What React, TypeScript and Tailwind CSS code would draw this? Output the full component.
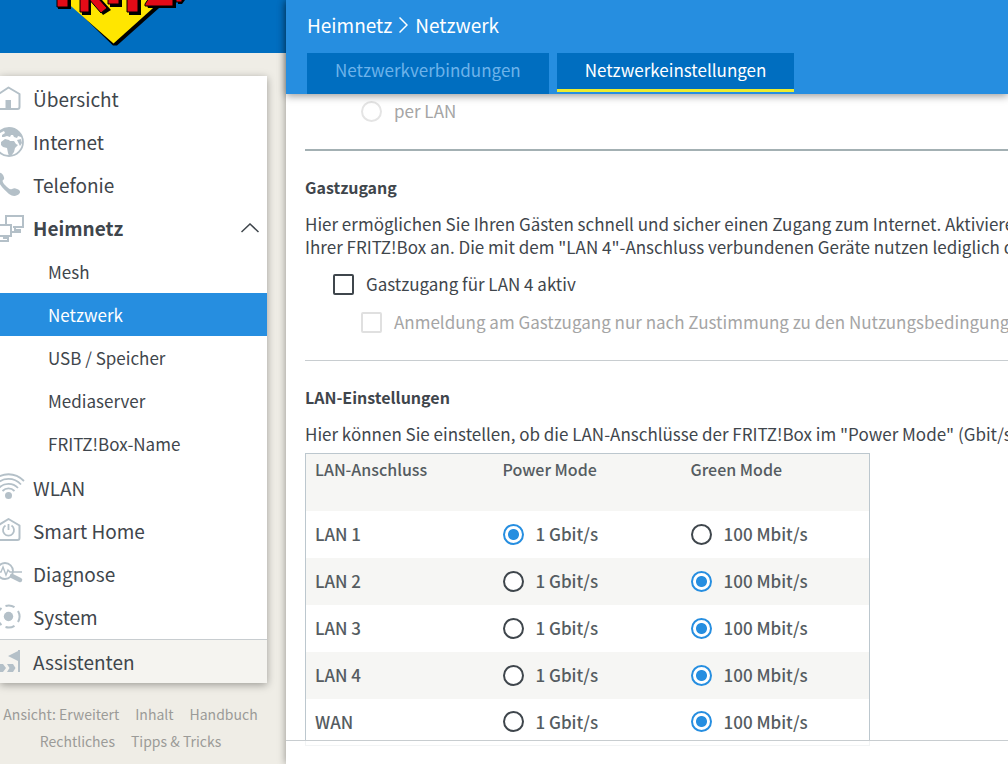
import type { ReactNode } from "react"

type NavItem = {
  label: string
  icon: ReactNode
}

const topItems: NavItem[] = [
  {
    label: "Übersicht",
    icon: (
      <>
        <path d="M-2 11.500 8.500 4.500 19.500 11V24a2 2 0 0 1-2 2H-2" fill="none" stroke="currentColor" strokeWidth="2" strokeLinejoin="round" />
        <path d="M5.500 17h5.500v9H5.500z" />
      </>
    ),
  },
  {
    label: "Internet",
    icon: (
      <>
        <circle cx="9" cy="16" r="14" fill="none" stroke="currentColor" strokeWidth="1.800" />
        <path d="M-4 10C0 4 4 2 9 2c5 0 10 3 13 8l-1 1-3-1-1 2-3-1-1-2-2 0-1 2-3-1-3 1-2 0 0-2 3-2-1-2-4 2-2 3z" />
        <path d="M1 16l4-3 4 1 1 1 4 0 2 3 2 1-3 3-1 4-3 4-2 0-1-3-1-5-4-1-2-2zM17 14l4-1 1 4-2 3z" />
      </>
    ),
  },
  {
    label: "Telefonie",
    icon: (
      <path d="M-2 4c2-1 4 0 5 2 1 2 2 4 0 5-1 1 0 3 2 5 3 3 5 5 7 4 2-1 3-1 5 0 3 1 4 3 2 5-2 2-6 3-10 0C4 21-2 14-3 9z" />
    ),
  },
]

const subItems = ["Mesh", "Netzwerk", "USB / Speicher", "Mediaserver", "FRITZ!Box-Name"]

const bottomItems: NavItem[] = [
  {
    label: "WLAN",
    icon: (
      <>
        <circle cx="8.500" cy="23.500" r="3.500" />
        <path d="M-7 9C2 0 15 0 24 9M-4 12.500C3 5 14 5 21 12.500M-1 16C4 10.500 13 10.500 18 16M2.500 19C6 15.500 11 15.500 14.500 19" fill="none" stroke="currentColor" strokeWidth="1.800" />
      </>
    ),
  },
  {
    label: "Smart Home",
    icon: (
      <>
        <path d="M-2 10.500 8.500 4 19.500 10.500V23a2 2 0 0 1-2 2H-2" fill="none" stroke="currentColor" strokeWidth="2" strokeLinejoin="round" />
        <path d="M5.500 10.500a5.500 5.500 0 1 0 6 0M8.500 9v6" fill="none" stroke="currentColor" strokeWidth="1.800" />
      </>
    ),
  },
  {
    label: "Diagnose",
    icon: (
      <>
        <circle cx="5" cy="13" r="8" fill="none" stroke="currentColor" strokeWidth="1.800" />
        <path d="M-1 14h2l2-5 3 8 2-5 2 2h12" fill="none" stroke="currentColor" strokeWidth="1.400" />
        <path d="M12 18l8 4" stroke="currentColor" strokeWidth="4.500" strokeLinecap="round" />
      </>
    ),
  },
  {
    label: "System",
    icon: (
      <>
        <circle cx="8.500" cy="15.500" r="4.700" />
        <path d="M5.500 5a11 11 0 0 1 9 1.200M18 10a11 11 0 0 1 0 11M14.500 24.800a11 11 0 0 1-9 1.200M1.500 24a11 11 0 0 1-3-4M-1.500 11a11 11 0 0 1 3-4" fill="none" stroke="currentColor" strokeWidth="2" />
      </>
    ),
  },
]

const footerLinks = ["Ansicht: Erweitert", "Inhalt", "Handbuch", "Rechtliches", "Tipps & Tricks"]

const ports = [
  { name: "LAN 1", mode: "power" },
  { name: "LAN 2", mode: "green" },
  { name: "LAN 3", mode: "green" },
  { name: "LAN 4", mode: "green" },
  { name: "WAN", mode: "green" },
]

const MenuIcon = ({ children }: { children: ReactNode }) => (
  <svg viewBox="0 0 25 32" className="h-8 w-[25px] shrink-0 text-[#b4c0c8]" fill="currentColor" aria-hidden="true">
    {children}
  </svg>
)

const MenuLink = ({ label, icon }: NavItem) => (
  <a href="#" className="flex h-[43px] items-center gap-2 text-[19px] leading-6">
    <MenuIcon>{icon}</MenuIcon>
    {label}
  </a>
)

const radioClass =
  "size-[21px] shrink-0 appearance-none rounded-full border-2 border-[#3f464c] bg-white checked:border-[#268ee0] checked:bg-[radial-gradient(circle,#268ee0_5px,#fff_6px)] disabled:border-[#e4e4e4]"

const checkboxClass =
  "size-[21px] shrink-0 appearance-none rounded-xs border-2 border-[#3f464c] bg-white disabled:border-[#e0e0e0]"

const Logo = () => (
  <svg viewBox="50 0 150 50" className="ml-[50px] h-[50px] w-[150px]" role="img" aria-label="FRITZ!">
    <path d="M66 0 113 45.500h4L168 0z" fill="#000" />
    <path d="M64 0 113.500 43.500 162 0z" fill="#ffe600" />
    {/* lower ends of the lettering, shadow first */}
    <path d="M58 0h13v9H58zM81 0h10v15H82zM92 0h10l9 10-8 5zM110 0h12v7h-12zM129 0h12v15h-12zM147 5l4-5h25v8h-28zM178 0h7l-3 4h-4z" fill="#000" />
    <g fill="#e30b17" stroke="#000" strokeWidth="1">
      <path d="M57-2h11v9H57z" />
      <path d="M80-2h9v14h-9z" />
      <path d="M88-2h10l9 10-6 5z" />
      <path d="M108-2h11v6h-11z" />
      <path d="M127-2h11v14h-11z" />
      <path d="M145 4l4-6h24v8h-28z" />
      <path d="M176-2h6v4h-6z" />
    </g>
  </svg>
)

const Sidebar = () => (
  <aside className="flex w-[286px] shrink-0 flex-col bg-[#efede6]">
    <div className="h-[53px] bg-[#006ec0]">
      <Logo />
    </div>

    {/* Menu */}
    <nav className="mt-[23px] mr-[19px] bg-white pt-px shadow-[0_2px_8px_rgba(0,0,0,0.35)]">
      {topItems.map((item) => (
        <MenuLink key={item.label} {...item} />
      ))}

      <a href="#" className="flex h-[43px] items-center gap-2 pr-2 text-[19px] leading-6 font-bold">
        <MenuIcon>
          <path d="M6 12V4h17v11H13M11 17v3h9v-2h-5v-3M-2 13h13v11H-2M-2 29H8v-3H4v-2" fill="none" stroke="currentColor" strokeWidth="2" />
        </MenuIcon>
        <span className="flex-1">Heimnetz</span>
        <svg viewBox="0 0 18 10" className="h-[10px] w-[18px]" fill="none" stroke="#3f464c" strokeWidth="1.500" aria-hidden="true">
          <path d="M0.500 9 9 1l8.500 8" />
        </svg>
      </a>
      <div className="py-px">
        {subItems.map((label) => (
          <a
            key={label}
            href="#"
            className={`flex h-[43px] items-center pl-12 ${label === "Netzwerk" ? "bg-[#268ee0] text-white" : ""}`}
          >
            {label}
          </a>
        ))}
      </div>

      {bottomItems.map((item) => (
        <MenuLink key={item.label} {...item} />
      ))}

      <div className="mt-px border-t border-[#c8cdd0] bg-[#f5f4f0]">
        <MenuLink
          label="Assistenten"
          icon={
            <>
              <path d="M18 4h2v22h-2zM18 5v10L8 10z" />
              <path d="M-2 18h5l3 4-3 4h-5zM7 18h6l2.500 4-2.500 4H7l2.500-4z" />
            </>
          }
        />
      </div>
    </nav>

    <div className="mt-[18px] mr-[25px] flex flex-wrap justify-center gap-x-4 text-sm leading-[27px] text-[#9b9b98]">
      {footerLinks.map((label) => (
        <a key={label} href="#">
          {label}
        </a>
      ))}
    </div>
  </aside>
)

const Rate = ({ port, mode, text, checked }: { port: string; mode: string; text: string; checked: boolean }) => (
  <label className="flex items-center gap-3">
    <input type="radio" name={port} value={mode} defaultChecked={checked} className={radioClass} />
    {text}
  </label>
)

const App = () => {
  return (
    <div className="flex h-screen overflow-hidden bg-[#efede6] font-['Noto_Sans_CJK_SC','Noto_Sans',sans-serif] text-[17px] leading-6 text-[#3f464c]">
      <Sidebar />

      <div className="relative flex min-w-0 flex-1 flex-col bg-white shadow-[0_0_8px_rgba(0,0,0,0.4)]">
        {/* Header */}
        <header className="z-10 h-[94px] shrink-0 bg-[#268ee0] pl-[21px] text-white shadow-[0_2px_8px_rgba(0,0,0,0.4)]">
          <div className="flex h-[53px] items-center gap-[7px] pb-1 text-[19px]">
            <a href="#">Heimnetz</a>
            <svg viewBox="0 0 9 16" className="h-4 w-[9px]" fill="none" stroke="currentColor" strokeWidth="1.500" aria-hidden="true">
              <path d="M0.500 0.500 8 8l-7.500 7.500" />
            </svg>
            <h1>Netzwerk</h1>
          </div>
          <nav className="flex items-start gap-2">
            <a href="#" className="h-[41px] bg-[#006ec0] px-[28px] leading-[34px] text-[#6db3ea]">
              Netzwerkverbindungen
            </a>
            <a href="#" className="h-[39px] border-b-3 border-[#ecec2e] bg-[#006ec0] px-[28px] leading-[34px]">
              Netzwerkeinstellungen
            </a>
          </nav>
        </header>

        {/* Content */}
        <main className="min-h-0 flex-1 overflow-hidden pl-[19px] whitespace-nowrap">
          <label className="mt-[5px] flex items-center gap-3 pl-14 text-[#a5a5a5]">
            <input type="radio" disabled className={radioClass} />
            per LAN
          </label>
          <hr className="mt-[26px] border-t-2 border-[#a3b0b3]" />

          <h2 className="mt-6 text-base font-bold">Gastzugang</h2>
          <p className="mt-[13px] leading-[23px]">
            Hier ermöglichen Sie Ihren Gästen schnell und sicher einen Zugang zum Internet. Aktivieren
            <br />
            Ihrer FRITZ!Box an. Die mit dem "LAN 4"-Anschluss verbundenen Geräte nutzen lediglich den
          </p>
          <label className="mt-3.5 flex items-center gap-3 pl-7">
            <input type="checkbox" className={checkboxClass} />
            Gastzugang für LAN 4 aktiv
          </label>
          <label className="mt-3.5 flex items-center gap-3 pl-14 text-[#a5a5a5]">
            <input type="checkbox" disabled className={checkboxClass} />
            Anmeldung am Gastzugang nur nach Zustimmung zu den Nutzungsbedingungen
          </label>
          <hr className="mt-[26px] border-[#c8cdd0]" />

          <h2 className="mt-6 text-base font-bold">LAN-Einstellungen</h2>
          <p className="mt-[13px]">
            Hier können Sie einstellen, ob die LAN-Anschlüsse der FRITZ!Box im "Power Mode" (Gbit/s)
          </p>
          <table className="mt-[7px] w-[565px] table-fixed border border-[#bcc7ce] text-left font-medium text-[#555c61]">
            <thead>
              <tr className="h-[57px] bg-[#f6f6f4] align-top text-base">
                <th className="px-[9px] pt-[3px] font-medium">LAN-Anschluss</th>
                <th className="px-[9px] pt-[3px] font-medium">Power Mode</th>
                <th className="px-[9px] pt-[3px] font-medium">Green Mode</th>
              </tr>
            </thead>
            <tbody>
              {ports.map(({ name, mode }) => (
                <tr key={name} className="h-[47px] even:bg-[#f6f6f4]">
                  <td className="px-[9px]">{name}</td>
                  <td className="px-[9px]">
                    <Rate port={name} mode="power" text="1 Gbit/s" checked={mode === "power"} />
                  </td>
                  <td className="px-[9px]">
                    <Rate port={name} mode="green" text="100 Mbit/s" checked={mode === "green"} />
                  </td>
                </tr>
              ))}
            </tbody>
          </table>
        </main>

        {/* Button bar, the content shows faintly through */}
        <div className="absolute inset-x-0 bottom-0 h-6 border-t border-[#c8cdd0] bg-white/80" />
      </div>
    </div>
  )
}

export default App
